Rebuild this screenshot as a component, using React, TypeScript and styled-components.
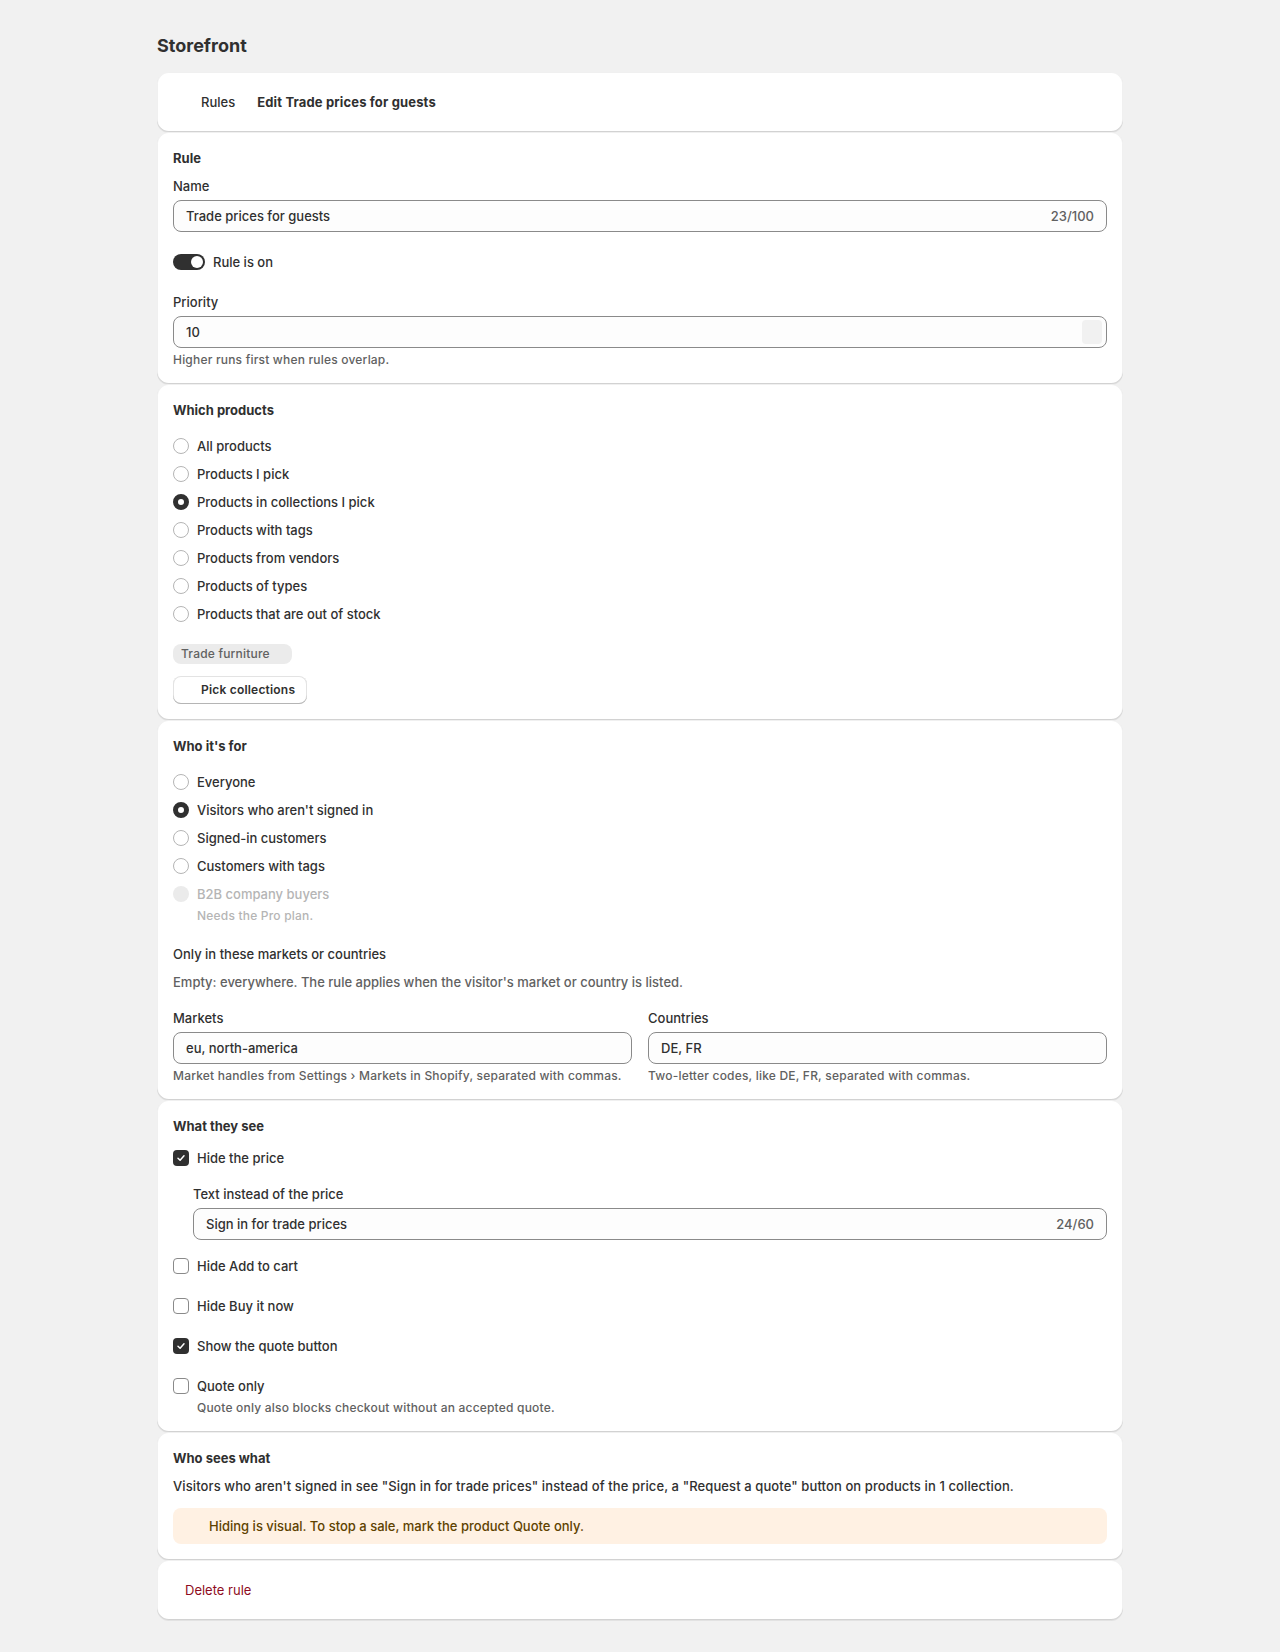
import styled, { createGlobalStyle } from "styled-components";

const Global = createGlobalStyle`
  html, body {
    margin: 0;
    padding: 0;
    background: #f1f1f1;
  }
  body {
    font-family: Inter, "Noto Sans", Arial, sans-serif;
    font-size: 13px;
    line-height: 20px;
    font-weight: 450;
    color: #303030;
    -webkit-font-smoothing: antialiased;
  }
  * { box-sizing: border-box; }
`;

const Page = styled.div`
  width: 966px;
  margin: 0 auto;
  padding: 34px 0 32px;
`;

const Title = styled.h1`
  margin: 0 0 14px;
  font-size: 18px;
  line-height: 24px;
  font-weight: 700;
  color: #303030;
`;

const Stack = styled.div`
  display: flex;
  flex-direction: column;
`;

const Card = styled.section`
  background: #fff;
  border-radius: 12px;
  padding: 16px;
  display: flex;
  flex-direction: column;
  box-shadow: 0 1px 0 rgba(26, 26, 26, 0.07), inset 0 -1px 0 rgba(0, 0, 0, 0.12),
    inset 0 0 0 1px rgba(0, 0, 0, 0.06);
`;

const Crumbs = styled.div`
  display: flex;
  align-items: center;
  height: 28px;
`;

const IconSlot = styled.span<{ $w: number }>`
  display: inline-block;
  width: ${({ $w }) => $w}px;
  height: 20px;
  flex: none;
`;

const CrumbLink = styled.span`
  font-weight: 500;
`;

const CrumbTitle = styled.span`
  font-weight: 650;
  letter-spacing: 0.15px;
`;

const Heading = styled.h2<{ $mb: number }>`
  margin: 0 0 ${({ $mb }) => $mb}px;
  font-size: 13px;
  line-height: 20px;
  font-weight: 650;
`;

const Label = styled.label<{ $mt?: number }>`
  display: block;
  margin-top: ${({ $mt }) => $mt ?? 0}px;
  margin-bottom: 4px;
`;

const SubTitle = styled.div<{ $mt: number }>`
  margin-top: ${({ $mt }) => $mt}px;
  font-weight: 550;
`;

const Muted = styled.p<{ $mt: number }>`
  margin: ${({ $mt }) => $mt}px 0 0;
  color: #616161;
`;

const Help = styled.div<{ $indent?: boolean; $disabled?: boolean }>`
  margin-top: 4px;
  padding-left: ${({ $indent }) => ($indent ? 24 : 0)}px;
  font-size: 12px;
  line-height: 16px;
  letter-spacing: 0.2px;
  color: ${({ $disabled }) => ($disabled ? "#b5b5b5" : "#616161")};
`;

const Input = styled.div`
  display: flex;
  align-items: center;
  height: 32px;
  padding: 0 12px;
  border: 1px solid #8a8a8a;
  border-radius: 8px;
  background: #fdfdfd;
`;

const Value = styled.span`
  flex: 1;
  color: #303030;
`;

const Counter = styled.span`
  color: #616161;
`;

const Spinner = styled.span`
  width: 20px;
  height: 24px;
  margin-right: -8px;
  border-radius: 4px;
  background: #f1f1f1;
`;

const ToggleRow = styled.div`
  display: flex;
  align-items: center;
  gap: 8px;
  margin-top: 20px;
  height: 20px;
`;

const Toggle = styled.span<{ $on: boolean }>`
  position: relative;
  width: 32px;
  height: 16px;
  border-radius: 8px;
  background: ${({ $on }) => ($on ? "#303030" : "#e3e3e3")};

  &::after {
    content: "";
    position: absolute;
    top: 2px;
    left: ${({ $on }) => ($on ? 18 : 2)}px;
    width: 12px;
    height: 12px;
    border-radius: 50%;
    background: #fff;
  }
`;

const ChoiceList = styled.div<{ $gap: number }>`
  display: flex;
  flex-direction: column;
  gap: ${({ $gap }) => $gap}px;
`;

const Choice = styled.div<{ $disabled?: boolean }>`
  display: flex;
  align-items: center;
  gap: 8px;
  height: 20px;
  color: ${({ $disabled }) => ($disabled ? "#b5b5b5" : "#303030")};
`;

const Radio = styled.span<{ $checked?: boolean; $disabled?: boolean }>`
  width: 16px;
  height: 16px;
  flex: none;
  border-radius: 50%;
  background: ${({ $disabled }) => ($disabled ? "#ebebeb" : "#fff")};
  border: ${({ $checked, $disabled }) =>
    $disabled ? "none" : $checked ? "5px solid #303030" : "1px solid #b5b5b5"};
`;

const Check = styled.span<{ $checked?: boolean }>`
  display: flex;
  align-items: center;
  justify-content: center;
  width: 16px;
  height: 16px;
  flex: none;
  border-radius: 4px;
  background: ${({ $checked }) => ($checked ? "#303030" : "#fff")};
  border: ${({ $checked }) => ($checked ? "none" : "1px solid #8a8a8a")};
`;

const Tag = styled.span`
  display: inline-flex;
  align-items: center;
  align-self: flex-start;
  height: 20px;
  margin-top: 20px;
  padding: 0 22px 0 8px;
  border-radius: 8px;
  background: #ebebeb;
  color: #616161;
  font-size: 12px;
  letter-spacing: 0.2px;
  font-weight: 450;
`;

const Button = styled.button`
  align-self: flex-start;
  height: 28px;
  margin-top: 12px;
  padding: 0 12px 0 28px;
  border: none;
  border-radius: 8px;
  background: #fff;
  font: inherit;
  font-size: 12px;
  letter-spacing: 0.2px;
  font-weight: 600;
  color: #303030;
  box-shadow: inset 0 -1px 0 #b5b5b5, inset 0 0 0 1px #e3e3e3;
`;

const Columns = styled.div`
  display: grid;
  grid-template-columns: 1fr 1fr;
  gap: 16px;
  margin-top: 16px;
`;

const Indented = styled.div`
  margin-top: 16px;
  padding-left: 20px;
`;

const CheckItem = styled.div<{ $mt: number }>`
  margin-top: ${({ $mt }) => $mt}px;
`;

const Body = styled.p`
  margin: 8px 0 12px;
  letter-spacing: 0.1px;
`;

const Banner = styled.div`
  padding: 8px 12px 8px 36px;
  border-radius: 8px;
  background: #fff1e3;
  color: #5e4200;
`;

const DangerButton = styled.button`
  align-self: flex-start;
  height: 28px;
  padding: 0 12px;
  border: none;
  background: none;
  font: inherit;
  font-weight: 400;
  color: #8e0b21;
`;

const Tick = () => (
  <svg width="10" height="10" viewBox="0 0 10 10" fill="none">
    <path d="M2 5.2 4.1 7.2 8 2.8" stroke="#fff" strokeWidth="1.5" strokeLinecap="round" strokeLinejoin="round" />
  </svg>
);

const productOptions = [
  "All products",
  "Products I pick",
  "Products in collections I pick",
  "Products with tags",
  "Products from vendors",
  "Products of types",
  "Products that are out of stock",
];

const audienceOptions = [
  "Everyone",
  "Visitors who aren't signed in",
  "Signed-in customers",
  "Customers with tags",
];

export default function App() {
  return (
    <>
      <Global />
      <Page>
        <Title>Storefront</Title>
        <Stack>
          <Card>
            <Crumbs>
              <IconSlot $w={28} />
              <CrumbLink>Rules</CrumbLink>
              <IconSlot $w={22} />
              <CrumbTitle>Edit Trade prices for guests</CrumbTitle>
            </Crumbs>
          </Card>

          <Card>
            <Heading $mb={8}>Rule</Heading>
            <Label>Name</Label>
            <Input>
              <Value>Trade prices for guests</Value>
              <Counter>23/100</Counter>
            </Input>
            <ToggleRow>
              <Toggle $on />
              <span>Rule is on</span>
            </ToggleRow>
            <Label $mt={20}>Priority</Label>
            <Input>
              <Value>10</Value>
              <Spinner />
            </Input>
            <Help>Higher runs first when rules overlap.</Help>
          </Card>

          <Card>
            <Heading $mb={16}>Which products</Heading>
            <ChoiceList $gap={8}>
              {productOptions.map((opt) => (
                <Choice key={opt}>
                  <Radio $checked={opt === "Products in collections I pick"} />
                  {opt}
                </Choice>
              ))}
            </ChoiceList>
            <Tag>Trade furniture</Tag>
            <Button>Pick collections</Button>
          </Card>

          <Card>
            <Heading $mb={16}>Who it's for</Heading>
            <ChoiceList $gap={8}>
              {audienceOptions.map((opt) => (
                <Choice key={opt}>
                  <Radio $checked={opt === "Visitors who aren't signed in"} />
                  {opt}
                </Choice>
              ))}
              <div>
                <Choice $disabled>
                  <Radio $disabled />
                  B2B company buyers
                </Choice>
                <Help $indent $disabled>Needs the Pro plan.</Help>
              </div>
            </ChoiceList>
            <SubTitle $mt={20}>Only in these markets or countries</SubTitle>
            <Muted $mt={8}>Empty: everywhere. The rule applies when the visitor's market or country is listed.</Muted>
            <Columns>
              <div>
                <Label>Markets</Label>
                <Input>
                  <Value>eu, north-america</Value>
                </Input>
                <Help>Market handles from Settings › Markets in Shopify, separated with commas.</Help>
              </div>
              <div>
                <Label>Countries</Label>
                <Input>
                  <Value>DE, FR</Value>
                </Input>
                <Help>Two-letter codes, like DE, FR, separated with commas.</Help>
              </div>
            </Columns>
          </Card>

          <Card>
            <Heading $mb={12}>What they see</Heading>
            <Choice>
              <Check $checked>
                <Tick />
              </Check>
              Hide the price
            </Choice>
            <Indented>
              <Label>Text instead of the price</Label>
              <Input>
                <Value>Sign in for trade prices</Value>
                <Counter>24/60</Counter>
              </Input>
            </Indented>
            <CheckItem $mt={16}>
              <Choice>
                <Check />
                Hide Add to cart
              </Choice>
            </CheckItem>
            <CheckItem $mt={20}>
              <Choice>
                <Check />
                Hide Buy it now
              </Choice>
            </CheckItem>
            <CheckItem $mt={20}>
              <Choice>
                <Check $checked>
                  <Tick />
                </Check>
                Show the quote button
              </Choice>
            </CheckItem>
            <CheckItem $mt={20}>
              <Choice>
                <Check />
                Quote only
              </Choice>
              <Help $indent>Quote only also blocks checkout without an accepted quote.</Help>
            </CheckItem>
          </Card>

          <Card>
            <Heading $mb={0}>Who sees what</Heading>
            <Body>
              Visitors who aren't signed in see "Sign in for trade prices" instead of the price, a "Request a quote"
              button on products in 1 collection.
            </Body>
            <Banner>Hiding is visual. To stop a sale, mark the product Quote only.</Banner>
          </Card>

          <Card>
            <DangerButton>Delete rule</DangerButton>
          </Card>
        </Stack>
      </Page>
    </>
  );
}
